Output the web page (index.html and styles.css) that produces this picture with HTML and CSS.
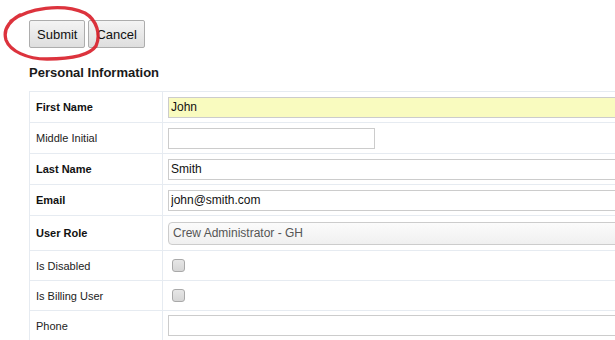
FILE: index.html
```html
<!DOCTYPE html>
<html lang="en">

<head>
    <meta charset="utf-8">
    <meta name="viewport" content="width=device-width, initial-scale=1.0">
    <title>Edit User</title>
    <link rel="stylesheet" href="styles.css">
</head>

<body>
    <div class="side">
        <div class="knapper">
            <button class="knap">Submit</button>
            <button class="knap">Cancel</button>
        </div>

        <!-- rød markering rundt om submit -->
        <svg class="markering" width="110" height="70" viewBox="0 0 110 70">
            <path d="M11 21 C 28 8, 62 3, 85 13 C 97 20, 101 35, 96 46 C 89 56, 68 59, 47 59 C 27 59, 10 51, 6 40 C 3 30, 8 22, 20 15"
                fill="none" stroke="#d9222c" stroke-width="3.3" stroke-linecap="round" opacity="0.92" />
        </svg>

        <h2 class="overskrift">Personal Information</h2>

        <table class="skema">
            <tr>
                <td class="felt krævet">First Name</td>
                <td class="vaerdi"><input type="text" class="tekst gul" value="John"></td>
            </tr>
            <tr>
                <td class="felt">Middle Initial</td>
                <td class="vaerdi"><input type="text" class="tekst kort" value=""></td>
            </tr>
            <tr>
                <td class="felt krævet">Last Name</td>
                <td class="vaerdi"><input type="text" class="tekst" value="Smith"></td>
            </tr>
            <tr>
                <td class="felt krævet">Email</td>
                <td class="vaerdi"><input type="text" class="tekst" value="john@smith.com"></td>
            </tr>
            <tr class="hoej">
                <td class="felt krævet">User Role</td>
                <td class="vaerdi">
                    <select class="rolle">
                        <option>Crew Administrator - GH</option>
                    </select>
                </td>
            </tr>
            <tr class="lav">
                <td class="felt">Is Disabled</td>
                <td class="vaerdi"><input type="checkbox" class="boks"></td>
            </tr>
            <tr class="lav">
                <td class="felt">Is Billing User</td>
                <td class="vaerdi"><input type="checkbox" class="boks"></td>
            </tr>
            <tr class="lav">
                <td class="felt">Phone</td>
                <td class="vaerdi"><input type="text" class="tekst" value=""></td>
            </tr>
        </table>
    </div>
</body>

</html>
```

FILE: styles.css
```css
html, body {
    overflow: hidden;
}

body {
    margin: 0;
    background-color: #fff;
    font-family: "Liberation Sans", Arial, sans-serif;
    color: #222;
}

.side {
    position: relative;
    padding: 20px 0 0 29px;
    width: 700px;
}

.knapper {
    display: flex;
    gap: 3px;
}

.knap {
    font-family: "Liberation Sans", Arial, sans-serif;
    font-size: 13px;
    color: #111;
    height: 28px;
    padding: 0 7px;
    border: 1px solid #adadad;
    border-radius: 2px;
    background: linear-gradient(#f4f4f4, #dedede);
}

.markering {
    position: absolute;
    left: 0;
    top: 0;
}

.overskrift {
    font-size: 13px;
    font-weight: bold;
    line-height: 15px;
    margin: 17px 0 11px 0;
    color: #1a1a1a;
}

.skema {
    border-collapse: separate;
    border-spacing: 0;
    border-top: 1px solid #e6ebf1;
    border-left: 1px solid #e6ebf1;
    width: 640px;
}

.skema td {
    height: 30px;
    padding: 0;
    border-bottom: 1px solid #e6ebf1;
    vertical-align: middle;
}

.skema tr.hoej td {
    height: 34px;
}

.skema tr.lav td {
    height: 29px;
}

.felt {
    width: 120px;
    padding: 0 6px !important;
    border-right: 1px solid #e6ebf1;
    font-size: 11px;
    color: #222;
}

.krævet {
    font-weight: bold;
    color: #111;
}

.vaerdi {
    padding-left: 5px !important;
}

.tekst {
    box-sizing: border-box;
    width: 500px;
    height: 21px;
    margin: 0;
    padding: 0 2px;
    border: 1px solid #cccccc;
    font-family: "Liberation Sans", Arial, sans-serif;
    font-size: 12px;
    color: #111;
    background: #fff;
    display: block;
}

.gul {
    background: #f9fbbf;
}

.kort {
    width: 207px;
}

.rolle {
    appearance: none;
    box-sizing: border-box;
    width: 500px;
    height: 23px;
    margin: 0;
    padding: 0 4px;
    border: 1px solid #cccccc;
    border-radius: 4px;
    background: linear-gradient(#fbfbfb, #f0f0f0);
    font-family: "Liberation Sans", Arial, sans-serif;
    font-size: 12px;
    color: #555;
    display: block;
}

.boks {
    appearance: none;
    display: block;
    width: 13px;
    height: 13px;
    margin: 0 0 0 4px;
    border: 1px solid #a9a9a9;
    border-radius: 3px;
    background: linear-gradient(#e6e6e6, #d6d6d6);
}
```
